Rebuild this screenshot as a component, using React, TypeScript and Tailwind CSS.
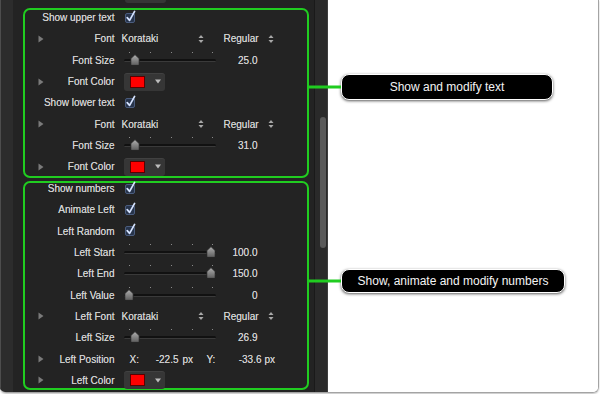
import type { ReactNode } from 'react';

const GREEN = 'border-[#20cc20]';

function Disclosure() {
  return (
    <svg width="6" height="8" viewBox="0 0 6 8" className="block">
      <path d="M0.5 0.5 L5.5 4 L0.5 7.5 Z" fill="#7a7a7a" />
    </svg>
  );
}

function UpDown() {
  return (
    <svg width="6" height="10" viewBox="0 0 6 10" className="block">
      <path d="M0.5 4 L3 1 L5.5 4 Z" fill="#a8a8a8" />
      <path d="M0.5 6 L3 9 L5.5 6 Z" fill="#a8a8a8" />
    </svg>
  );
}

function Row({ label, disclosure, children }: { label: string; disclosure?: boolean; children?: ReactNode }) {
  return (
    <div className="flex h-[21.3px] shrink-0 items-center">
      <div className="flex w-[90px] items-center pl-[13px]">
        <span className="w-[6px]">{disclosure && <Disclosure />}</span>
        <span className="flex-1 text-right whitespace-nowrap">{label}</span>
      </div>
      <div className="ml-[7px] flex items-center">{children}</div>
    </div>
  );
}

function Checkbox() {
  return (
    <div className="relative ml-[3px] h-[10px] w-[10px] rounded-[2px] border border-[#4b5d7e] bg-[#27344b]">
      <svg width="12" height="14" viewBox="0 0 12 14" className="absolute left-[-1px] top-[-5px]">
        <path d="M2.2 8.6 L4.6 11.4 L9.6 2.4" fill="none" stroke="#d6e4ff" strokeWidth="1.7" strokeLinecap="round" strokeLinejoin="round" />
      </svg>
    </div>
  );
}

function ColorWell() {
  return (
    <div className="ml-[2px] flex h-[18px] w-[41px] items-center rounded-[3px] bg-[#363636] shadow-[inset_0_1px_0_rgba(255,255,255,0.06)]">
      <div className="ml-[6px] h-[12px] w-[15px] border border-[#5a0000] bg-[#ff0000]" />
      <svg width="6" height="5" viewBox="0 0 6 5" className="ml-[10px] block">
        <path d="M0 0.5 H6 L3 4.5 Z" fill="#bdbdbd" />
      </svg>
    </div>
  );
}

function Slider({ knob, value }: { knob: number; value: string }) {
  const ticks = [5, 26, 47, 68, 88];
  return (
    <>
      <div className="relative ml-[2px] h-[21px] w-[92px]">
        {ticks.map((t) => (
          <div key={t} className="absolute top-[2px] h-[1px] w-[1px] bg-[#8a8a8a]" style={{ left: t }} />
        ))}
        <div className="absolute left-0 right-0 top-[9px] h-[3px] rounded-full border-b border-[#3a3a3a] bg-[#111]" />
        <svg width="10" height="12" viewBox="0 0 10 12" className="absolute top-[4px]" style={{ left: knob - 5 }}>
          <defs>
            <linearGradient id={`k${knob}`} x1="0" y1="0" x2="0" y2="1">
              <stop offset="0" stopColor="#b0b0b0" />
              <stop offset="1" stopColor="#5c5c5c" />
            </linearGradient>
          </defs>
          <path d="M0.8 4.6 L5 0.6 L9.2 4.6 V11.4 H0.8 Z" fill={`url(#k${knob})`} stroke="#1c1c1c" strokeWidth="0.8" />
        </svg>
      </div>
      <span className="w-[42px] text-right">{value}</span>
    </>
  );
}

function FontPopups() {
  return (
    <>
      <div className="flex w-[82px] items-center justify-between">
        <span>Korataki</span>
        <UpDown />
      </div>
      <div className="ml-[20px] flex w-[50px] items-center justify-between">
        <span>Regular</span>
        <UpDown />
      </div>
    </>
  );
}

function Callout({ text, className }: { text: string; className: string }) {
  return (
    <div
      className={`relative ml-[13px] flex items-center justify-center rounded-[8px] border-[1.5px] border-white bg-black text-[12px] text-[#f4f4f4] shadow-[0_1px_3px_rgba(0,0,0,0.65)] ${className}`}
    >
      <div className="absolute right-full top-1/2 mr-[1px] h-[3px] w-[32px] -translate-y-1/2 bg-[#20cc20]" />
      {text}
    </div>
  );
}

export default function App() {
  return (
    <div className="h-[394px] w-[600px] overflow-hidden bg-white" style={{ fontFamily: '"Liberation Sans", Arial, sans-serif' }}>
      <div className="flex h-[393px] w-[599px] overflow-hidden rounded-b-[6px] border-b border-r border-[#a4a4a4] shadow-[0_1px_2px_rgba(0,0,0,0.25)]">
        {/* Inspector panel */}
        <div className="flex w-[328px] shrink-0 bg-[#232323] text-[10px] text-[#d2d2d2] [text-shadow:0_0_0.5px_rgba(220,220,220,0.8)]">
          <div className="w-[13px] shrink-0 border-l border-[#4d4d4d] bg-[#2c2c2c]" />
          <div className="flex w-[301px] shrink-0 flex-col">
            <div className="ml-[112px] h-[3px] w-[41px] rounded-b-[3px] bg-[#363636]" />

            <div className={`ml-[10px] mt-[5px] flex h-[170px] w-[286px] flex-col rounded-[7px] border-[2.5px] ${GREEN}`}>
              <div className="-ml-[0.5px] mt-[-3px] flex flex-col">
                <Row label="Show upper text">
                  <Checkbox />
                </Row>
                <Row label="Font" disclosure>
                  <FontPopups />
                </Row>
                <Row label="Font Size">
                  <Slider knob={11} value="25.0" />
                </Row>
                <Row label="Font Color" disclosure>
                  <ColorWell />
                </Row>
                <Row label="Show lower text">
                  <Checkbox />
                </Row>
                <Row label="Font" disclosure>
                  <FontPopups />
                </Row>
                <Row label="Font Size">
                  <Slider knob={11} value="31.0" />
                </Row>
                <Row label="Font Color" disclosure>
                  <ColorWell />
                </Row>
              </div>
            </div>

            <div className={`ml-[10px] mt-[3px] flex h-[209px] w-[286px] flex-col rounded-[7px] border-[2.5px] ${GREEN}`}>
              <div className="-ml-[0.5px] mt-[-5px] flex flex-col">
                <Row label="Show numbers">
                  <Checkbox />
                </Row>
                <Row label="Animate Left">
                  <Checkbox />
                </Row>
                <Row label="Left Random">
                  <Checkbox />
                </Row>
                <Row label="Left Start">
                  <Slider knob={87} value="100.0" />
                </Row>
                <Row label="Left End">
                  <Slider knob={87} value="150.0" />
                </Row>
                <Row label="Left Value">
                  <Slider knob={5} value="0" />
                </Row>
                <Row label="Left Font" disclosure>
                  <FontPopups />
                </Row>
                <Row label="Left Size">
                  <Slider knob={11} value="26.9" />
                </Row>
                <Row label="Left Position" disclosure>
                  <span className="ml-[8px] w-[12px]">X:</span>
                  <span className="w-[37px] text-right">-22.5</span>
                  <span className="ml-[4px] w-[10px]">px</span>
                  <span className="ml-[14px] w-[12px]">Y:</span>
                  <span className="w-[43px] text-right">-33.6</span>
                  <span className="ml-[3px]">px</span>
                </Row>
                <Row label="Left Color" disclosure>
                  <ColorWell />
                </Row>
              </div>
            </div>
          </div>
          {/* Scroll bar */}
          <div className="w-[1px] shrink-0 bg-[#1a1a1a]" />
          <div className="w-[13px] shrink-0 border-r border-[#3e3e3e] bg-[#2a2a2a]">
            <div className="ml-[5px] mt-[117px] h-[131px] w-[6px] rounded-full bg-[#5a5a5a]" />
          </div>
        </div>

        {/* Annotations */}
        <div className="flex flex-1 flex-col bg-white">
          <Callout text="Show and modify text" className="mt-[74px] h-[26px] w-[212px]" />
          <Callout text="Show, animate and modify numbers" className="mt-[169px] h-[24px] w-[224px]" />
        </div>
      </div>
    </div>
  );
}
